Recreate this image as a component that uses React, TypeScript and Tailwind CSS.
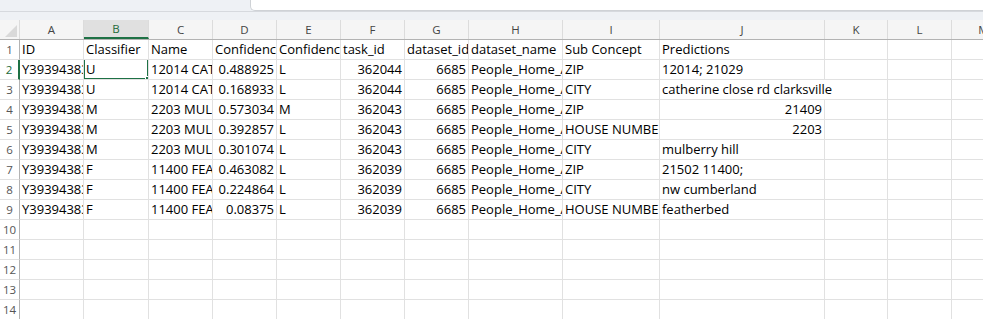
import type { ReactNode } from 'react';

type Col = { letter: string; w: string };

const COLS: Col[] = [
  { letter: 'A', w: 'w-[64px]' },
  { letter: 'B', w: 'w-[65px]' },
  { letter: 'C', w: 'w-[64px]' },
  { letter: 'D', w: 'w-[64px]' },
  { letter: 'E', w: 'w-[64px]' },
  { letter: 'F', w: 'w-[64px]' },
  { letter: 'G', w: 'w-[64px]' },
  { letter: 'H', w: 'w-[94px]' },
  { letter: 'I', w: 'w-[97px]' },
  { letter: 'J', w: 'w-[165px]' },
  { letter: 'K', w: 'w-[63px]' },
  { letter: 'L', w: 'w-[64px]' },
  { letter: 'M', w: 'w-[64px]' },
];

// a number is right aligned, a string left aligned, like Excel does
type Value = string | number | null;

const ROWS: Value[][] = [
  ['ID', 'Classifier', 'Name', 'Confidence', 'Confidence Level', 'task_id', 'dataset_id', 'dataset_name', 'Sub Concept', 'Predictions'],
  ['Y3939438302', 'U', '12014 CATHERINE CLOSE RD', 0.488925, 'L', 362044, 6685, 'People_Home_Address', 'ZIP', '12014; 21029'],
  ['Y3939438302', 'U', '12014 CATHERINE CLOSE RD', 0.168933, 'L', 362044, 6685, 'People_Home_Address', 'CITY', 'catherine close rd clarksville'],
  ['Y3939438317', 'M', '2203 MULBERRY HILL RD', 0.573034, 'M', 362043, 6685, 'People_Home_Address', 'ZIP', 21409],
  ['Y3939438317', 'M', '2203 MULBERRY HILL RD', 0.392857, 'L', 362043, 6685, 'People_Home_Address', 'HOUSE NUMBER', 2203],
  ['Y3939438317', 'M', '2203 MULBERRY HILL RD', 0.301074, 'L', 362043, 6685, 'People_Home_Address', 'CITY', 'mulberry hill'],
  ['Y3939438329', 'F', '11400 FEATHERBED LN', 0.463082, 'L', 362039, 6685, 'People_Home_Address', 'ZIP', '21502 11400;'],
  ['Y3939438329', 'F', '11400 FEATHERBED LN', 0.224864, 'L', 362039, 6685, 'People_Home_Address', 'CITY', 'nw cumberland'],
  ['Y3939438329', 'F', '11400 FEATHERBED LN', 0.08375, 'L', 362039, 6685, 'People_Home_Address', 'HOUSE NUMBER', 'featherbed'],
];

const TOTAL_ROWS = 14;
const SEL_ROW = 1;
const SEL_COL = 1;

function ColumnHeader({ col, active }: { col: Col; active: boolean }) {
  return (
    <div
      className={`${col.w} flex h-full shrink-0 items-center justify-center border-r border-[#dcdcdc] pt-[1px] text-[11.5px] ${
        active ? 'border-b-2 border-b-[#1e7145] bg-[#e0e0e0] text-[#1e6b3a]' : 'text-[#444]'
      }`}
    >
      {col.letter}
    </div>
  );
}

function Cell({ col, value, overflow, children }: { col: Col; value: Value; overflow?: boolean; children?: ReactNode }) {
  const isNum = typeof value === 'number';
  return (
    <div
      className={`${col.w} relative h-5 shrink-0 whitespace-nowrap border-b border-[#e1e1e1] px-[2px] text-[13px] leading-[19px] text-black ${
        overflow ? 'z-10 overflow-visible' : 'overflow-hidden border-r'
      } ${isNum ? 'text-right' : 'text-left'}`}
    >
      {value === null ? '' : String(value)}
      {children}
    </div>
  );
}

function Selection() {
  return (
    <div className="pointer-events-none absolute -left-[1px] -top-[2px] z-20 h-[22px] w-[66px] border-2 border-[#1e7145]">
      <div className="absolute -bottom-[4px] -right-[4px] h-[6px] w-[6px] border border-white bg-[#1e7145]" />
    </div>
  );
}

export default function App() {
  return (
    <div className="h-[319px] w-[983px] overflow-hidden bg-white font-['Open_Sans','Liberation_Sans',sans-serif]">
      {/* bottom edge of the formula bar */}
      <div className="flex h-[12px] border-b border-[#d6d9de] bg-[#eef1f5]">
        <div className="w-[250px] shrink-0" />
        <div className="flex-1 rounded-bl-[5px] border-b border-l border-[#cfd2d6] bg-white" />
      </div>
      <div className="h-[8px] bg-[#eef1f5]" />

      {/* column headers */}
      <div className="flex h-[20px] border-b border-[#b3b3b3] bg-[#f5f5f5]">
        <div className="relative h-full w-[20px] shrink-0 border-r border-[#dcdcdc]">
          <svg className="absolute bottom-[2px] right-[2px]" width="12" height="12" viewBox="0 0 12 12">
            <polygon points="12,0 12,12 0,12" fill="#d9d9d9" />
          </svg>
        </div>
        {COLS.map((c, i) => (
          <ColumnHeader key={c.letter} col={c} active={i === SEL_COL} />
        ))}
      </div>

      {/* rows */}
      {Array.from({ length: TOTAL_ROWS }, (_, r) => {
        const data = ROWS[r] ?? [];
        return (
          <div key={r} className="flex">
            <div
              className={`flex h-5 w-[20px] shrink-0 items-center justify-center border-b border-[#e1e1e1] bg-white pt-[1px] text-[11.5px] ${
                r === SEL_ROW ? 'border-r-2 border-r-[#1e7145] text-[#1e6b3a]' : 'border-r border-r-[#b3b3b3] text-[#555]'
              }`}
            >
              {r + 1}
            </div>
            {COLS.map((c, ci) => (
              <Cell key={c.letter} col={c} value={data[ci] ?? null} overflow={r === 2 && ci === 9}>
                {r === SEL_ROW && ci === SEL_COL ? <Selection /> : null}
              </Cell>
            ))}
          </div>
        );
      })}
    </div>
  );
}
